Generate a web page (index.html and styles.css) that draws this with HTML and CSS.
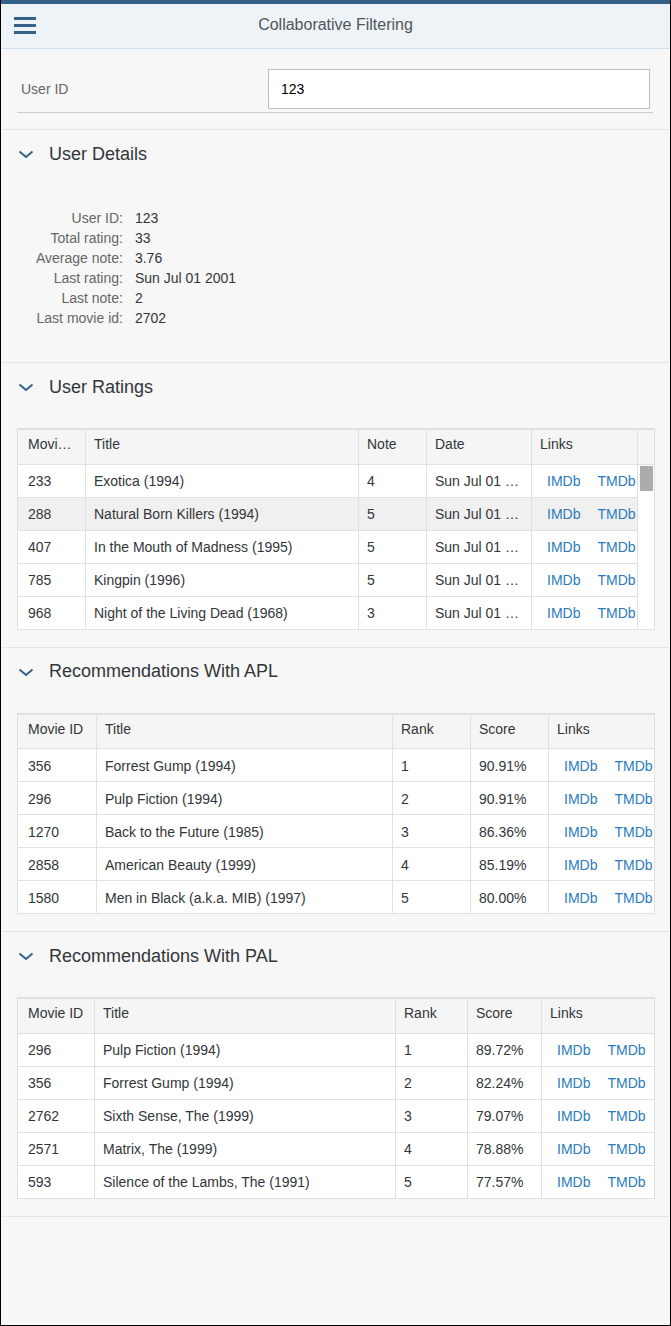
FILE: index.html
```html
<!DOCTYPE html>
<html>
<head>
<meta charset="utf-8">
<link rel="stylesheet" href="styles.css">
</head>
<body>
<div class="frame">
  <header class="shell">
    <div class="menu" aria-label="menu"><span></span><span></span><span></span></div>
    <div class="app-title">Collaborative Filtering</div>
  </header>

  <section class="form-section">
    <div class="form-row">
      <label class="form-label">User ID</label>
      <div class="input-box">123</div>
    </div>
  </section>

  <section class="panel details-panel">
    <div class="panel-head">
      <svg class="chev" width="16" height="10" viewBox="0 0 16 10"><path d="M1.5 2.5 L8 8 L14.5 2.5" fill="none" stroke="#346187" stroke-width="2"/></svg>
      <span class="panel-title">User Details</span>
    </div>
    <dl class="details">
      <dt>User ID:</dt><dd>123</dd>
      <dt>Total rating:</dt><dd>33</dd>
      <dt>Average note:</dt><dd>3.76</dd>
      <dt>Last rating:</dt><dd>Sun Jul 01 2001</dd>
      <dt>Last note:</dt><dd>2</dd>
      <dt>Last movie id:</dt><dd>2702</dd>
    </dl>
  </section>

  <section class="panel">
    <div class="panel-head">
      <svg class="chev" width="16" height="10" viewBox="0 0 16 10"><path d="M1.5 2.5 L8 8 L14.5 2.5" fill="none" stroke="#346187" stroke-width="2"/></svg>
      <span class="panel-title">User Ratings</span>
    </div>
    <table class="grid ratings">
      <colgroup><col style="width:68px"><col style="width:273px"><col style="width:68px"><col style="width:105px"><col style="width:106px"><col style="width:17px"></colgroup>
      <thead><tr><th>Movie ID</th><th>Title</th><th>Note</th><th>Date</th><th>Links</th><th class="sb-head"></th></tr></thead>
      <tbody>
        <tr><td>233</td><td>Exotica (1994)</td><td>4</td><td>Sun Jul 01 2001</td><td class="links"><a>IMDb</a><a>TMDb</a></td><td class="sb" rowspan="5"><div class="thumb"></div></td></tr>
        <tr class="hover"><td>288</td><td>Natural Born Killers (1994)</td><td>5</td><td>Sun Jul 01 2001</td><td class="links"><a>IMDb</a><a>TMDb</a></td></tr>
        <tr><td>407</td><td>In the Mouth of Madness (1995)</td><td>5</td><td>Sun Jul 01 2001</td><td class="links"><a>IMDb</a><a>TMDb</a></td></tr>
        <tr><td>785</td><td>Kingpin (1996)</td><td>5</td><td>Sun Jul 01 2001</td><td class="links"><a>IMDb</a><a>TMDb</a></td></tr>
        <tr><td>968</td><td>Night of the Living Dead (1968)</td><td>3</td><td>Sun Jul 01 2001</td><td class="links"><a>IMDb</a><a>TMDb</a></td></tr>
      </tbody>
    </table>
  </section>

  <section class="panel">
    <div class="panel-head">
      <svg class="chev" width="16" height="10" viewBox="0 0 16 10"><path d="M1.5 2.5 L8 8 L14.5 2.5" fill="none" stroke="#346187" stroke-width="2"/></svg>
      <span class="panel-title">Recommendations With APL</span>
    </div>
    <table class="grid">
      <colgroup><col style="width:79px"><col style="width:296px"><col style="width:78px"><col style="width:78px"><col style="width:106px"></colgroup>
      <thead><tr><th>Movie ID</th><th>Title</th><th>Rank</th><th>Score</th><th>Links</th></tr></thead>
      <tbody>
        <tr><td>356</td><td>Forrest Gump (1994)</td><td>1</td><td>90.91%</td><td class="links"><a>IMDb</a><a>TMDb</a></td></tr>
        <tr><td>296</td><td>Pulp Fiction (1994)</td><td>2</td><td>90.91%</td><td class="links"><a>IMDb</a><a>TMDb</a></td></tr>
        <tr><td>1270</td><td>Back to the Future (1985)</td><td>3</td><td>86.36%</td><td class="links"><a>IMDb</a><a>TMDb</a></td></tr>
        <tr><td>2858</td><td>American Beauty (1999)</td><td>4</td><td>85.19%</td><td class="links"><a>IMDb</a><a>TMDb</a></td></tr>
        <tr><td>1580</td><td>Men in Black (a.k.a. MIB) (1997)</td><td>5</td><td>80.00%</td><td class="links"><a>IMDb</a><a>TMDb</a></td></tr>
      </tbody>
    </table>
  </section>

  <section class="panel">
    <div class="panel-head">
      <svg class="chev" width="16" height="10" viewBox="0 0 16 10"><path d="M1.5 2.5 L8 8 L14.5 2.5" fill="none" stroke="#346187" stroke-width="2"/></svg>
      <span class="panel-title">Recommendations With PAL</span>
    </div>
    <table class="grid">
      <colgroup><col style="width:77px"><col style="width:301px"><col style="width:72px"><col style="width:74px"><col style="width:113px"></colgroup>
      <thead><tr><th>Movie ID</th><th>Title</th><th>Rank</th><th>Score</th><th>Links</th></tr></thead>
      <tbody>
        <tr><td>296</td><td>Pulp Fiction (1994)</td><td>1</td><td>89.72%</td><td class="links"><a>IMDb</a><a>TMDb</a></td></tr>
        <tr><td>356</td><td>Forrest Gump (1994)</td><td>2</td><td>82.24%</td><td class="links"><a>IMDb</a><a>TMDb</a></td></tr>
        <tr><td>2762</td><td>Sixth Sense, The (1999)</td><td>3</td><td>79.07%</td><td class="links"><a>IMDb</a><a>TMDb</a></td></tr>
        <tr><td>2571</td><td>Matrix, The (1999)</td><td>4</td><td>78.88%</td><td class="links"><a>IMDb</a><a>TMDb</a></td></tr>
        <tr><td>593</td><td>Silence of the Lambs, The (1991)</td><td>5</td><td>77.57%</td><td class="links"><a>IMDb</a><a>TMDb</a></td></tr>
      </tbody>
    </table>
  </section>
</div>
</body>
</html>
```

FILE: styles.css
```css
* { box-sizing: border-box; }
html, body { margin: 0; padding: 0; }
body {
  font-family: "Liberation Sans", Arial, sans-serif;
  font-size: 14px;
  color: #32363a;
  background: #f7f7f7;
}
.frame {
  height: 1326px;
  border: 1px solid #000;
  border-top: 0;
  background: #f7f7f7;
  overflow: hidden;
}
.shell {
  height: 49px;
  border-top: 4px solid #346187;
  border-bottom: 1px solid #d1e0ef;
  background: #eef3f8;
  display: flex;
  align-items: center;
  padding: 0 0 2px 13px;
}
.menu {
  width: 22px;
  display: flex;
  flex-direction: column;
  gap: 4px;
}
.menu span {
  display: block;
  height: 3px;
  background: #346187;
}
.app-title {
  flex: 1;
  text-align: center;
  font-size: 16px;
  color: #515559;
  padding-right: 35px;
}

.form-section {
  padding: 20px 16px 16px 16px;
  border-bottom: 1px solid #e5e5e5;
}
.form-row {
  display: grid;
  grid-template-columns: 251px 382px;
  align-items: center;
  padding: 0 0 3px 0;
  border-bottom: 1px solid #cccccc;
  margin-right: 1px;
}
.form-label {
  padding-left: 4px;
  color: #666;
  font-size: 14px;
}
.input-box {
  height: 40px;
  background: #fff;
  border: 1px solid #bfbfbf;
  padding: 0 12px;
  line-height: 38px;
  color: #000;
  font-size: 14px;
}

.panel {
  border-bottom: 1px solid #e5e5e5;
  padding: 0 16px 17px 16px;
}
.panel-head {
  height: 48px;
  display: flex;
  align-items: center;
  margin-bottom: 17px;
}
.chev { margin-left: 1px; margin-right: 15px; }
.panel-title {
  font-size: 18px;
  color: #32363a;
}

.details-panel { padding-bottom: 34px; }
.details-panel .panel-head { margin-bottom: 0; }
.details {
  margin: 30px 0 0 19px;
  display: grid;
  grid-template-columns: max-content auto;
  column-gap: 12px;
  line-height: 20px;
}
.details dt { text-align: right; color: #666; }
.details dd { margin: 0; color: #32363a; }

.grid {
  width: 637px;
  table-layout: fixed;
  border-collapse: collapse;
  border: 1px solid #e0e0e0;
  border-top: 2px solid #e0e0e0;
  background: #fff;
}
.grid th, .grid td {
  border: 1px solid #e0e0e0;
  text-align: left;
  font-weight: normal;
  white-space: nowrap;
  overflow: hidden;
  text-overflow: ellipsis;
  padding: 0 8px 0 8px;
}
.grid th:first-child, .grid td:first-child { padding-left: 10px; }
.grid th {
  height: 35px;
  background: #f5f5f5;
  color: #32363a;
  padding-bottom: 5px;
}
.grid td {
  height: 33px;
  color: #32363a;
  padding-top: 1px;
}
.grid tr.hover td { background: #f0f0f0; }
.grid td.links {
  padding-left: 15px;
  padding-right: 0;
  text-overflow: clip;
}
.links a {
  color: #2b7bbd;
  margin-right: 17px;
}
.ratings .sb-head { padding: 0; }
.ratings td.sb {
  padding: 0;
  vertical-align: top;
  background: #fff;
}
.thumb {
  width: 13px;
  height: 25px;
  margin: 1px 0 0 2px;
  background: #ababab;
}
```
